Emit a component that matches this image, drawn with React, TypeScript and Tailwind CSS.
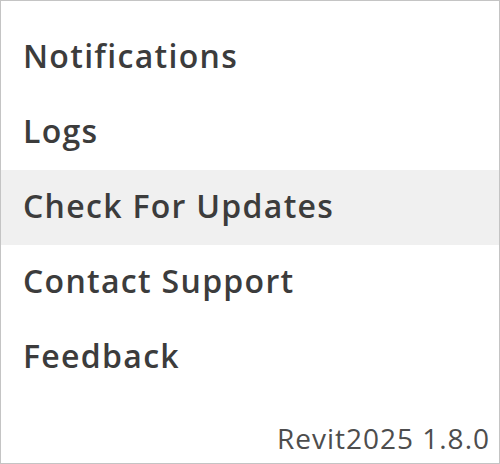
export default function App() {
  const items = ["Notifications", "Logs", "Check For Updates", "Contact Support", "Feedback"];
  return (
    <div className="w-[500px] h-[464px] bg-white border border-[#c4c4c4] flex flex-col" style={{ fontFamily: '"Open Sans", "Noto Sans", sans-serif' }}>
      <div className="pt-[19px] flex flex-col">
        {items.map((t) => (
          <div
            key={t}
            className={`h-[75px] flex items-center pl-[22px] pb-[3px] text-[32px] tracking-[1.3px] font-semibold text-[#3c3c3c] ${t === "Check For Updates" ? "bg-[#f0f0f0]" : ""}`}
          >
            {t}
          </div>
        ))}
      </div>
      <div className="flex-1 flex items-end justify-end pr-[9px] pb-[11px]">
        <span className="text-[28px] tracking-[1px] text-[#4d4d4d] leading-none">Revit2025 1.8.0</span>
      </div>
    </div>
  );
}
